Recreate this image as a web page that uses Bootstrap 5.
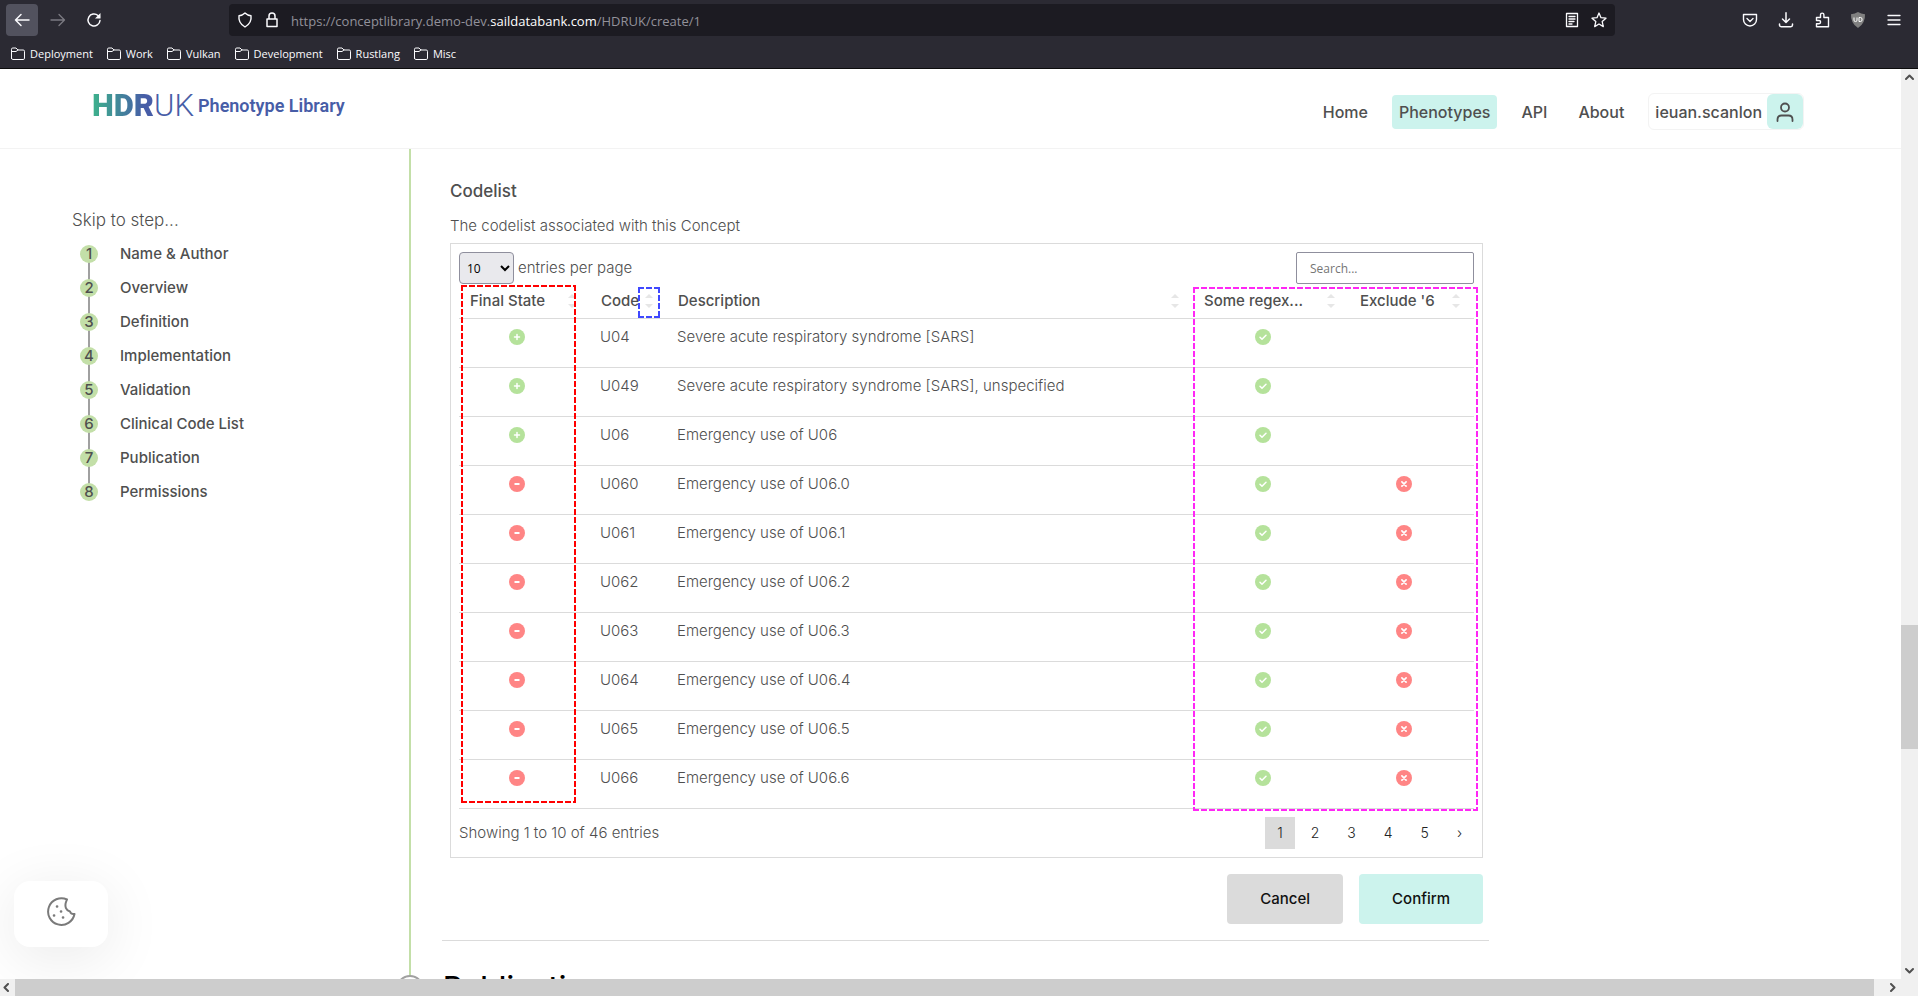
<!DOCTYPE html>
<html lang="en">
<head>
<meta charset="utf-8">
<meta name="viewport" content="width=device-width, initial-scale=1">
<title>HDR UK Phenotype Library</title>
<link href="https://cdn.jsdelivr.net/npm/bootstrap@5.3.0/dist/css/bootstrap.min.css" rel="stylesheet">
<style>
  body { font-family: Inter, "Open Sans", sans-serif; font-size: 15px; line-height: 18px; color: #4f4f4f; background: #fff; }
  a { color: inherit; text-decoration: none; }
  svg { flex: none; display: block; }
  .ico { fill: none; stroke: currentColor; stroke-linecap: round; stroke-linejoin: round; }

  /* browser frame */
  .chrome { flex: none; background: #2b2a33; color: #fbfbfe; font-family: "Open Sans", sans-serif; border-bottom: 1px solid #0c0c0d; }
  .tools { height: 40px; padding: 0 8px 0 6px; }
  .tool { width: 32px; height: 32px; padding: 0; border: 0; border-radius: 4px; background: none; color: inherit; display: flex; align-items: center; justify-content: center; }
  .tool.on { background: #52525e; }
  .tool.off { color: #7b7a82; }
  .address { background: #1c1b22; height: 32px; border-radius: 4px; margin: 0 119px; padding: 0 8px; font-size: 13px; gap: 12px; }
  .url-dim { color: #92919a; line-height: 20px; padding-top: 2px; }
  .bookmarks { height: 28px; padding: 0 10px; font-size: 11px; gap: 13px; }
  .bookmarks a { gap: 4px; }

  /* page header */
  .site-head { flex: none; height: 80px; border-bottom: 1px solid #f3f3f3; padding: 0 97px 0 92px; }
  .logo { font-family: Roboto, sans-serif; gap: 4px; height: 34px; margin-bottom: 6px; }
  .logo-mark { font-size: 31px; line-height: 34px; font-weight: 300; color: #475da7; }
  .logo-mark b { font-weight: 900; background: linear-gradient(90deg, #3db28c, #475da7 85%); -webkit-background-clip: text; background-clip: text; color: transparent; }
  .logo-name { font-size: 18px; font-weight: 600; color: #475da7; }
  .menu { font-size: 16px; font-weight: 500; margin-top: 6px; }
  .menu .nav-link { color: #4f4f4f; padding: 8px 7px; margin-right: 17px; border-radius: 4px; line-height: 18px; }
  .menu .nav-link.active { background: #ccf3ed; }
  .user-box { border: 1px solid #f3f3f3; border-radius: 6px; padding-left: 6px; gap: 5px; }
  .avatar { width: 36px; height: 35px; border-radius: 6px; background: #ccf3ed; display: flex; align-items: center; justify-content: center; }

  /* page body */
  .stage { min-height: 0; }
  .layout { display: grid; grid-template-columns: 409px minmax(0, 1fr) 412px; min-height: 0; }
  .steps { padding: 60px 0 0 72px; }
  .steps h2 { font-size: 17px; line-height: 22px; font-weight: 300; margin: 0 0 14px; }
  .steps ol { padding: 0 0 0 8px; margin: 0; list-style: none; font-weight: 500; }
  .steps li { height: 34px; position: relative; }
  .steps li a { gap: 22px; }
  .dot { width: 18px; height: 18px; border-radius: 50%; background: #c3dfa8; text-align: center; z-index: 1; }
  .steps li:not(:last-child)::before { content: ""; position: absolute; left: 8px; top: 17px; width: 2px; height: 18px; background: #a0a0a0; }
  .trail { border-left: 2px solid #c3dfa8; padding: 0 0 0 31px; }
  .part { border-bottom: 1px solid #dbdbdb; padding: 32px 6px 16px 8px; }
  .part h3 { font-size: 17px; line-height: 20px; font-weight: 500; margin: 0 0 15px; }
  .part p { margin: 0 0 7px; line-height: 20px; font-weight: 300; }
  .listing { border: 1px solid #dbdbdb; padding: 8px; font-weight: 300; }
  .per-page { width: 55px; height: 32px; border: 1px solid #8f8f9d; border-radius: 4px; background: #e9e9ed; font: 12px "Open Sans", sans-serif; color: #000; padding: 0 2px 0 3px; }
  .finder { width: 178px; height: 32px; border: 1px solid #8f8f9d; border-radius: 2px; font: 12px "Open Sans", sans-serif; padding: 0 13px; }
  .finder::placeholder { color: #757575; }
  .codes { width: 100%; table-layout: fixed; border-collapse: collapse; }
  .codes th { padding: 0; height: 34px; }
  .codes th button { font-weight: 500; color: #4f4f4f; border: 0; background: none; width: 100%; padding: 0 14px 0 11px; display: flex; justify-content: space-between; align-items: center; white-space: nowrap; }
  .codes tr { border-bottom: 1px solid #dbdbdb; }
  .codes td { height: 49px; padding: 9px 10px 8px; vertical-align: top; }
  .codes td.flag { padding: 10px 16px 8px 0; }
  .flag svg { margin: 0 auto; }
  .c-state { width: 131px; } .c-code { width: 77px; } .c-regex { width: 156px; } .c-excl { width: 125px; }

  /* dashed markers laid over table regions */
  .outline { position: absolute; pointer-events: none; --h: repeating-linear-gradient(90deg, var(--ink) 0 6px, transparent 6px 8px); --v: repeating-linear-gradient(180deg, var(--ink) 0 6px, transparent 6px 8px);
    background: var(--h) top / 100% 2px no-repeat, var(--h) bottom / 100% 2px no-repeat, var(--v) left / 2px 100% no-repeat, var(--v) right / 2px 100% no-repeat; }
  .outline-state { --ink: #f00; left: 2px; top: 1px; width: 115px; bottom: 6px; }
  .outline-sort { --ink: #3f48ff; left: 179px; top: 3px; width: 22px; height: 31px; }
  .outline-rules { --ink: #ff27f5; right: -4px; top: 3px; width: 285px; bottom: -2px; }

  .pager { gap: 4px; margin: 0; padding: 0; list-style: none; font-size: 14px; color: #222; }
  .pager a { display: block; padding: 7px 12px; }
  .pager .now { background: #dbdbdb; }
  .act { border: 0; border-radius: 4px; height: 50px; padding: 0 33px; font-weight: 500; color: #111; }
  .act-cancel { background: #dbdbdb; } .act-confirm { background: #ccf3ed; }
  .next-part { position: relative; padding: 28px 0 0 1px; }
  .next-part h2 { font-size: 30px; line-height: 36px; font-weight: 500; color: #000; margin: 0; }
  .ring { position: absolute; left: -46px; top: 34px; width: 28px; height: 28px; border: 2px solid #a0a0a0; border-radius: 50%; background: #fff; }
  .cookie { position: absolute; left: 14px; bottom: 32px; width: 94px; height: 66px; border: 0; border-radius: 16px; background: #fff; color: #7a7a7a; box-shadow: 0 10px 60px rgba(0,0,0,.09); display: flex; align-items: center; justify-content: center; padding-bottom: 6px; }

  /* scroll bars */
  .bar-v { flex: none; width: 17px; background: #f0f0f0; color: #505050; }
  .bar-h { flex: none; height: 17px; background: #f0f0f0; color: #505050; }
  .thumb { background: #cdcdcd; }
</style>
</head>
<body class="vh-100 d-flex flex-column overflow-hidden">

<svg width="0" height="0" class="position-absolute" aria-hidden="true">
  <symbol id="folder" viewBox="0 0 16 16"><path class="ico" d="M1.5 12.2V3.3q0-1.3 1.3-1.3h3.2l2 2h5.200q1.300 0 1.300 1.300v6.900q0 1.300-1.300 1.300H2.800q-1.300 0-1.300-1.300zM1.500 5.500h4.500l2-1.500"/></symbol>
  <symbol id="plus" viewBox="0 0 16 16"><circle cx="8" cy="8" r="8" fill="#b5e29b"/><path d="M8 5.500v5M5.500 8h5" stroke="#fff" stroke-width="1.500" stroke-linecap="round"/></symbol>
  <symbol id="minus" viewBox="0 0 16 16"><circle cx="8" cy="8" r="8" fill="#ff8585"/><path d="M5.500 8h5" stroke="#fff" stroke-width="2"/></symbol>
  <symbol id="tick" viewBox="0 0 16 16"><circle cx="8" cy="8" r="8" fill="#b5e29b"/><path d="M5 8.200l2 2 4-4" fill="none" stroke="#fff" stroke-width="1.500" stroke-linecap="round" stroke-linejoin="round"/></symbol>
  <symbol id="cross" viewBox="0 0 16 16"><circle cx="8" cy="8" r="8" fill="#ff8585"/><path d="M5.900 5.900l4.200 4.200M10.100 5.900l-4.200 4.200" stroke="#fff" stroke-width="1.700" stroke-linecap="round"/></symbol>
  <symbol id="sort" viewBox="0 0 8 14"><path d="M4 0l4 4H0zM4 14l4-4H0z" fill="#e6e6e6"/></symbol>
</svg>

<header class="chrome">
  <div class="tools d-flex align-items-center">
    <div class="d-flex gap-1">
      <button class="tool on" aria-label="Back"><svg width="16" height="16" class="ico" stroke-width="1.5"><path d="M15 8H1.500M7 2.500L1.500 8 7 13.500"/></svg></button>
      <button class="tool off" aria-label="Forward"><svg width="16" height="16" class="ico" stroke-width="1.3"><path d="M1 8h13.500M9 2.500L14.500 8 9 13.500"/></svg></button>
      <button class="tool" aria-label="Reload"><svg width="16" height="16" class="ico" stroke-width="1.5"><path d="M14 8.500a6 6 0 1 1-2-5l1.500 1.500"/><path d="M14.500 1v5.500H9z" fill="currentColor" stroke="none"/></svg></button>
    </div>
    <div class="address d-flex align-items-center flex-fill">
      <svg width="16" height="16" class="ico" stroke-width="1.400"><path d="M8 1q2.500 2.500 6 2.700 1 7.500-6 11.300Q1 11.200 2 3.700 5.500 3.500 8 1z"/></svg>
      <svg width="14" height="16" class="ico" stroke-width="1.500"><path d="M2 7h10v7.500H2zM4 7V4a3 3 0 0 1 6 0v3"/></svg>
      <span class="url-dim">https://conceptlibrary.demo-dev.<span class="text-white">saildatabank.com</span>/HDRUK/create/1</span>
      <svg width="14" height="16" class="ico ms-auto" stroke-width="1.300"><path d="M1.500 1.500h11v13h-11zM4 4.500h6M4 7h6M4 9.500h5M4 12h3"/></svg>
      <svg width="16" height="16" class="ico" stroke-width="1.300"><path d="M8 1l2 4.700 5 .5-3.800 3.400 1.100 5L8 12l-4.300 2.600 1.100-5L1 6.200l5-.5z"/></svg>
    </div>
    <div class="d-flex gap-1">
      <button class="tool" aria-label="Pocket"><svg width="16" height="16" class="ico" stroke-width="1.400"><path d="M1.500 2.500h13v5a6.500 6.500 0 0 1-13 0zM5 6.500l3 3 3-3"/></svg></button>
      <button class="tool" aria-label="Downloads"><svg width="16" height="16" class="ico" stroke-width="1.500"><path d="M8 .8V10M4.500 7L8 10.500 11.500 7M1.500 12v1q0 1.700 1.700 1.700h9.600q1.700 0 1.700-1.700v-1"/></svg></button>
      <button class="tool" aria-label="Extensions"><svg width="16" height="16" class="ico" stroke-width="1.400"><path d="M2.500 5.500H6.500V2.800a1.700 1.700 0 0 1 3.400 0V5.500h4.600v9.200h-12v-3H5a1.600 1.600 0 0 0 0-3.200H2.500z"/></svg></button>
      <button class="tool" aria-label="uBlock"><svg width="16" height="16"><path d="M8 0q3 2 7 2.200Q15.500 11 8 16 .5 11 1 2.200 5 2 8 0z" fill="#808080"/><path d="M4 5.500v2.600a1.500 1.500 0 0 0 3 0V5.500M9 5.500h1.500a1.500 1.500 0 0 1 1.500 1.500v1a1.500 1.500 0 0 1-1.500 1.500H9z" fill="none" stroke="#fff"/></svg></button>
      <button class="tool" aria-label="Menu"><svg width="14" height="12" class="ico" stroke-width="1.300"><path d="M1 1.500h12M1 6h12M1 10.500h12"/></svg></button>
    </div>
  </div>
  <nav class="bookmarks d-flex align-items-center" aria-label="Bookmarks">
    <a href="#" class="d-flex align-items-center"><svg width="16" height="16"><use href="#folder"/></svg>Deployment</a>
    <a href="#" class="d-flex align-items-center"><svg width="16" height="16"><use href="#folder"/></svg>Work</a>
    <a href="#" class="d-flex align-items-center"><svg width="16" height="16"><use href="#folder"/></svg>Vulkan</a>
    <a href="#" class="d-flex align-items-center"><svg width="16" height="16"><use href="#folder"/></svg>Development</a>
    <a href="#" class="d-flex align-items-center"><svg width="16" height="16"><use href="#folder"/></svg>Rustlang</a>
    <a href="#" class="d-flex align-items-center"><svg width="16" height="16"><use href="#folder"/></svg>Misc</a>
  </nav>
</header>

<div class="stage d-flex flex-fill">
  <div class="flex-fill d-flex flex-column overflow-hidden position-relative">
    <div class="site-head d-flex align-items-center justify-content-between">
      <a href="#" class="logo d-flex align-items-center"><span class="logo-mark"><b>HDR</b>UK</span><span class="logo-name">Phenotype Library</span></a>
      <nav class="menu nav align-items-center flex-nowrap">
        <a class="nav-link" href="#">Home</a>
        <a class="nav-link active" href="#">Phenotypes</a>
        <a class="nav-link" href="#">API</a>
        <a class="nav-link" href="#">About</a>
        <a class="user-box d-flex align-items-center" href="#">ieuan.scanlon
          <span class="avatar"><svg width="18" height="20" class="ico" stroke-width="1.800"><circle cx="9" cy="5.500" r="4"/><path d="M1.500 19v-1.500q0-4 4-4h7q4 0 4 4V19"/></svg></span>
        </a>
      </nav>
    </div>

    <div class="layout flex-fill">
      <aside class="steps">
        <h2>Skip to step...</h2>
        <ol>
          <li><a href="#" class="d-flex"><span class="dot">1</span>Name &amp; Author</a></li>
          <li><a href="#" class="d-flex"><span class="dot">2</span>Overview</a></li>
          <li><a href="#" class="d-flex"><span class="dot">3</span>Definition</a></li>
          <li><a href="#" class="d-flex"><span class="dot">4</span>Implementation</a></li>
          <li><a href="#" class="d-flex"><span class="dot">5</span>Validation</a></li>
          <li><a href="#" class="d-flex"><span class="dot">6</span>Clinical Code List</a></li>
          <li><a href="#" class="d-flex"><span class="dot">7</span>Publication</a></li>
          <li><a href="#" class="d-flex"><span class="dot">8</span>Permissions</a></li>
        </ol>
      </aside>

      <main class="trail">
        <section class="part">
          <h3>Codelist</h3>
          <p>The codelist associated with this Concept</p>
          <div class="listing">
            <div class="d-flex justify-content-between align-items-center">
              <label class="d-flex align-items-center gap-1"><select class="per-page"><option>10</option><option>25</option></select>entries per page</label>
              <input class="finder" type="search" placeholder="Search..." aria-label="Search">
            </div>
            <div class="position-relative">
              <table class="codes">
                <colgroup><col class="c-state"><col class="c-code"><col><col class="c-regex"><col class="c-excl"></colgroup>
                <thead>
                  <tr>
                    <th><button>Final State<svg width="8" height="14"><use href="#sort"/></svg></button></th>
                    <th><button>Code<svg width="8" height="14"><use href="#sort"/></svg></button></th>
                    <th><button>Description<svg width="8" height="14"><use href="#sort"/></svg></button></th>
                    <th><button>Some regex...<svg width="8" height="14"><use href="#sort"/></svg></button></th>
                    <th><button>Exclude '6<svg width="8" height="14"><use href="#sort"/></svg></button></th>
                  </tr>
                </thead>
                <tbody>
                  <tr><td class="flag"><svg width="16" height="16"><use href="#plus"/></svg></td><td>U04</td><td>Severe acute respiratory syndrome [SARS]</td><td class="flag"><svg width="16" height="16"><use href="#tick"/></svg></td><td></td></tr>
                  <tr><td class="flag"><svg width="16" height="16"><use href="#plus"/></svg></td><td>U049</td><td>Severe acute respiratory syndrome [SARS], unspecified</td><td class="flag"><svg width="16" height="16"><use href="#tick"/></svg></td><td></td></tr>
                  <tr><td class="flag"><svg width="16" height="16"><use href="#plus"/></svg></td><td>U06</td><td>Emergency use of U06</td><td class="flag"><svg width="16" height="16"><use href="#tick"/></svg></td><td></td></tr>
                  <tr><td class="flag"><svg width="16" height="16"><use href="#minus"/></svg></td><td>U060</td><td>Emergency use of U06.0</td><td class="flag"><svg width="16" height="16"><use href="#tick"/></svg></td><td class="flag"><svg width="16" height="16"><use href="#cross"/></svg></td></tr>
                  <tr><td class="flag"><svg width="16" height="16"><use href="#minus"/></svg></td><td>U061</td><td>Emergency use of U06.1</td><td class="flag"><svg width="16" height="16"><use href="#tick"/></svg></td><td class="flag"><svg width="16" height="16"><use href="#cross"/></svg></td></tr>
                  <tr><td class="flag"><svg width="16" height="16"><use href="#minus"/></svg></td><td>U062</td><td>Emergency use of U06.2</td><td class="flag"><svg width="16" height="16"><use href="#tick"/></svg></td><td class="flag"><svg width="16" height="16"><use href="#cross"/></svg></td></tr>
                  <tr><td class="flag"><svg width="16" height="16"><use href="#minus"/></svg></td><td>U063</td><td>Emergency use of U06.3</td><td class="flag"><svg width="16" height="16"><use href="#tick"/></svg></td><td class="flag"><svg width="16" height="16"><use href="#cross"/></svg></td></tr>
                  <tr><td class="flag"><svg width="16" height="16"><use href="#minus"/></svg></td><td>U064</td><td>Emergency use of U06.4</td><td class="flag"><svg width="16" height="16"><use href="#tick"/></svg></td><td class="flag"><svg width="16" height="16"><use href="#cross"/></svg></td></tr>
                  <tr><td class="flag"><svg width="16" height="16"><use href="#minus"/></svg></td><td>U065</td><td>Emergency use of U06.5</td><td class="flag"><svg width="16" height="16"><use href="#tick"/></svg></td><td class="flag"><svg width="16" height="16"><use href="#cross"/></svg></td></tr>
                  <tr><td class="flag"><svg width="16" height="16"><use href="#minus"/></svg></td><td>U066</td><td>Emergency use of U06.6</td><td class="flag"><svg width="16" height="16"><use href="#tick"/></svg></td><td class="flag"><svg width="16" height="16"><use href="#cross"/></svg></td></tr>
                </tbody>
              </table>
              <div class="outline outline-state"></div>
              <div class="outline outline-sort"></div>
              <div class="outline outline-rules"></div>
            </div>
            <div class="d-flex justify-content-between align-items-center pt-2">
              <span>Showing 1 to 10 of 46 entries</span>
              <ul class="pager d-flex">
                <li><a href="#" class="now">1</a></li><li><a href="#">2</a></li><li><a href="#">3</a></li><li><a href="#">4</a></li><li><a href="#">5</a></li><li><a href="#">›</a></li>
              </ul>
            </div>
          </div>
          <div class="d-flex justify-content-end gap-3 mt-3">
            <button class="act act-cancel">Cancel</button>
            <button class="act act-confirm">Confirm</button>
          </div>
        </section>
        <section class="next-part"><span class="ring"></span><h2>Publication</h2></section>
      </main>
    </div>
    <button class="cookie" aria-label="Cookie settings"><svg width="30" height="30" class="ico" stroke-width="2"><path d="M21 2.500A13.300 13.300 0 1 0 28.500 17c-3 .5-4-1-4.500-2.500-4-1-5.500-5-4-9.500z"/><path d="M11 9.500h.1M15 14.500h.1M8 18.500h.1M17 20.500h.1" stroke-width="2.600"/></svg></button>
  </div>
  <div class="bar-v d-flex flex-column align-items-center py-1">
    <svg width="9" height="8" class="ico" stroke-width="2"><path d="M1 6l3.500-3.500L8 6"/></svg>
    <div style="flex:543"></div><div class="thumb w-100" style="flex:124"></div><div style="flex:218"></div>
    <svg width="9" height="8" class="ico" stroke-width="2"><path d="M1 2l3.500 3.500L8 2"/></svg>
  </div>
</div>
<div class="bar-h d-flex align-items-center">
  <svg width="15" height="9" class="ico" stroke-width="2"><path d="M8 1L4.500 4.500 8 8"/></svg>
  <div class="thumb h-100 flex-fill"></div>
  <svg width="44" height="9" class="ico" stroke-width="2"><path d="M17 1l3.500 3.500L17 8"/></svg>
</div>
<script src="https://cdn.jsdelivr.net/npm/bootstrap@5.3.0/dist/js/bootstrap.bundle.min.js"></script>
</body>
</html>
